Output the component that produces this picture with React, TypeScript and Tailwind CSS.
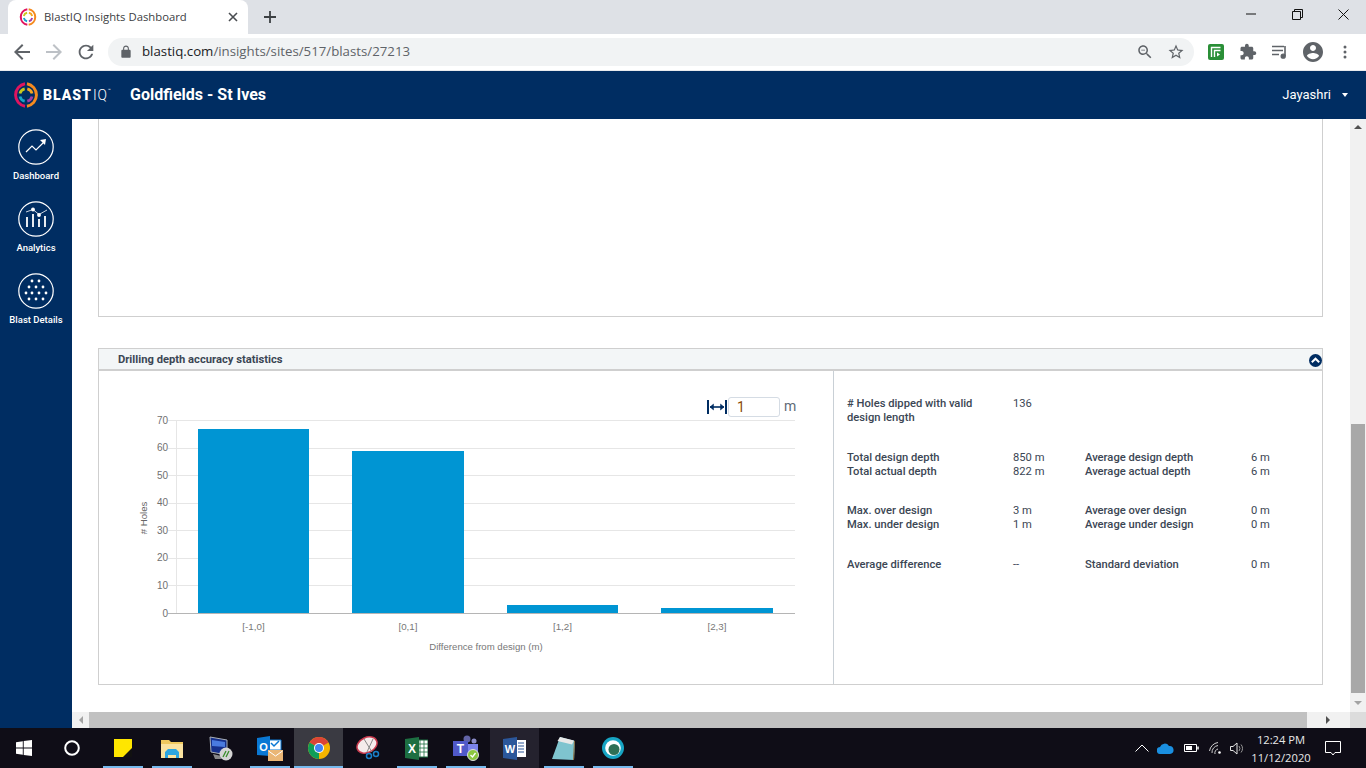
import React from "react";

const P = ({ d, size = 24, cls = "" }: { d: string; size?: number; cls?: string }) => (
  <svg width={size} height={size} viewBox="0 0 24 24" className={cls} fill="currentColor"><path d={d} /></svg>
);

const back = "M20 11H7.83l5.59-5.59L12 4l-8 8 8 8 1.41-1.41L7.83 13H20v-2z";
const fwd = "M4 11h12.17l-5.59-5.59L12 4l8 8-8 8-1.41-1.41L16.17 13H4v-2z";
const reload = "M17.65 6.35C16.2 4.9 14.21 4 12 4c-4.42 0-7.99 3.58-7.99 8s3.57 8 7.99 8c3.73 0 6.84-2.55 7.73-6h-2.08c-.82 2.33-3.04 4-5.65 4-3.31 0-6-2.69-6-6s2.69-6 6-6c1.66 0 3.14.69 4.22 1.78L13 11h7V4l-2.35 2.35z";
const lock = "M18 8h-1V6c0-2.76-2.24-5-5-5S7 3.24 7 6v2H6c-1.1 0-2 .9-2 2v10c0 1.1.9 2 2 2h12c1.1 0 2-.9 2-2V10c0-1.1-.9-2-2-2zM15.1 8H8.9V6c0-1.71 1.39-3.1 3.1-3.1 1.71 0 3.1 1.39 3.1 3.1v2z";
const ext = "M20.5 11H19V7c0-1.1-.9-2-2-2h-4V3.5C13 2.12 11.88 1 10.5 1S8 2.12 8 3.5V5H4c-1.1 0-1.99.9-1.99 2v3.8H3.5c1.49 0 2.7 1.21 2.7 2.7s-1.21 2.7-2.7 2.7H2V20c0 1.1.9 2 2 2h3.8v-1.5c0-1.49 1.21-2.7 2.7-2.7 1.49 0 2.7 1.21 2.7 2.7V22H17c1.1 0 2-.9 2-2v-4h1.5c1.38 0 2.5-1.12 2.5-2.5S21.88 11 20.5 11z";
const acct = "M12 2C6.48 2 2 6.48 2 12s4.48 10 10 10 10-4.48 10-10S17.52 2 12 2zm0 3c1.66 0 3 1.34 3 3s-1.34 3-3 3-3-1.34-3-3 1.34-3 3-3zm0 14.2c-2.5 0-4.71-1.28-6-3.22.03-1.99 4-3.08 6-3.08 1.99 0 5.97 1.09 6 3.08-1.29 1.94-3.5 3.22-6 3.22z";
const star = "M22 9.24l-7.19-.62L12 2 9.19 8.63 2 9.24l5.46 4.73L5.82 21 12 17.27 18.18 21l-1.63-7.03L22 9.24zM12 15.4l-3.76 2.27 1-4.28-3.32-2.88 4.38-.38L12 6.1l1.71 4.04 4.38.38-3.32 2.88 1 4.28L12 15.4z";
const zoomOut = "M15.5 14h-.79l-.28-.27C15.41 12.59 16 11.11 16 9.5 16 5.91 13.09 3 9.5 3S3 5.91 3 9.5 5.91 16 9.5 16c1.61 0 3.09-.59 4.23-1.57l.27.28v.79l5 4.99L20.49 19l-4.99-5zm-6 0C7.01 14 5 11.99 5 9.5S7.01 5 9.5 5 14 7.01 14 9.5 11.99 14 9.5 14zM7 9h5v1H7z";

const Ring = ({ size }: { size: number }) => (
  <svg width={size} height={size} viewBox="0 0 32 32" fill="none" className="shrink-0">
    <path d="M14.800 2.200A14 14 0 0 0 14.800 29.800" stroke="#e0145f" strokeWidth="3.600" />
    <path d="M17.200 2.200A14 14 0 0 1 17.200 29.800" stroke="#f58a1f" strokeWidth="3.600" />
    <path d="M8.600 14.200A7.700 7.700 0 0 1 14.400 8.500" stroke="#c8c81e" strokeWidth="3.400" />
    <path d="M17.600 8.500A7.700 7.700 0 0 1 23.400 14.200" stroke="#f5a623" strokeWidth="3.400" />
    <path d="M8.600 17.800A7.700 7.700 0 0 0 14.400 23.500" stroke="#19a6c9" strokeWidth="3.400" />
    <path d="M17.600 23.500A7.700 7.700 0 0 0 23.400 17.800" stroke="#a23ea8" strokeWidth="3.400" />
  </svg>
);

function TabStrip() {
  return (
    <div className="flex h-[34px] bg-[#dee1e6] shrink-0">
      <div className="ml-2 w-[240px] h-[34px] bg-white rounded-t-[8px] flex items-center pl-[11px] pr-[10px]">
        <Ring size={18} />
        <span className="ml-[7px] flex-1 text-[11.300px] text-[#3c4043] font-['Open_Sans',sans-serif] whitespace-nowrap">BlastIQ Insights Dashboard</span>
        <svg width="10" height="10" viewBox="0 0 10 10" stroke="#4a4d51" strokeWidth="1.6"><path d="M1 1l8 8M9 1l-8 8" /></svg>
      </div>
      <div className="ml-4 flex items-center text-[#3c4043]">
        <svg width="12" height="12" viewBox="0 0 12 12" stroke="currentColor" strokeWidth="1.8"><path d="M6 0v12M0 6h12" /></svg>
      </div>
      <div className="flex-1" />
      <div className="flex h-7 text-[#111]">
        <div className="w-[46px] flex items-center justify-center">
          <svg width="10" height="2" viewBox="0 0 10 2" stroke="currentColor"><path d="M0 1h10" /></svg>
        </div>
        <div className="w-[46px] flex items-center justify-center">
          <svg width="11" height="11" viewBox="0 0 11 11" fill="none" stroke="currentColor"><path d="M.5 2.500h8v8h-8zM2.500 2.500v-2h8v8h-2" /></svg>
        </div>
        <div className="w-[46px] flex items-center justify-center">
          <svg width="11" height="11" viewBox="0 0 11 11" fill="none" stroke="currentColor"><path d="M.5.500l10 10M10.500.500l-10 10" /></svg>
        </div>
      </div>
    </div>
  );
}

function Toolbar() {
  return (
    <div className="flex h-[37px] items-start bg-white border-b border-b-[#e8eaed] shrink-0 pt-1">
      <div className="flex items-center h-7 pl-[10px] text-[#5f6368]">
        <P d={back} size={24} />
        <P d={fwd} size={24} cls="ml-2 text-[#bdc1c6]" />
        <P d={reload} size={22} cls="ml-[9px]" />
      </div>
      <div className="ml-[11px] w-[1086px] h-7 rounded-full bg-[#f1f3f4] flex items-center pl-[11px] pr-[9px]">
        <P d={lock} size={14} cls="text-[#5f6368]" />
        <span className="ml-[9px] flex-1 text-[13.250px] font-['Open_Sans',sans-serif] text-[#5f6368] whitespace-nowrap">
          <span className="text-[#202124]">blastiq.com</span>/insights/sites/517/blasts/27213
        </span>
        <P d={zoomOut} size={18} cls="text-[#5f6368]" />
        <P d={star} size={18} cls="ml-[13px] text-[#5f6368]" />
      </div>
      <div className="flex items-center h-7 text-[#5f6368]">
        <div className="ml-[14px] w-4 h-4 rounded-[2px] bg-[#2a8f37] flex items-center justify-center">
          <svg width="12" height="12" viewBox="0 0 12 12" fill="none" stroke="#fff" strokeWidth="1.400"><path d="M1.500 11V1.500h9M4.500 11V4.500h6" /><path d="M7 6.500l3 2-3 2z" fill="#fff" stroke="none" /></svg>
        </div>
        <P d={ext} size={18} cls="ml-[15px]" />
        <svg width="18" height="18" viewBox="0 0 18 18" className="ml-[14px]" fill="none" stroke="currentColor" strokeWidth="1.300"><path d="M1 3.500h12M1 7.500h11M1 11.500h7" /><path d="M14 3v10" strokeWidth="1.600" /><circle cx="12.200" cy="13.200" r="2" fill="currentColor" /></svg>
        <P d={acct} size={24} cls="ml-[12px]" />
        <svg width="4" height="14" viewBox="0 0 4 14" className="ml-[18px]" fill="currentColor"><circle cx="2" cy="2" r="1.500" /><circle cx="2" cy="7" r="1.500" /><circle cx="2" cy="12" r="1.500" /></svg>
      </div>
    </div>
  );
}

function AppHeader() {
  return (
    <div className="flex h-12 bg-[#002d62] items-center text-white shrink-0 font-['Roboto',sans-serif]">
      <div className="ml-[13px]"><Ring size={26} /></div>
      <div className="ml-[4px] w-[73px] flex items-baseline text-[14px] leading-none whitespace-nowrap">
        <span className="font-black tracking-[1px]">BLAST</span>
        <span className="ml-[1px] font-light tracking-[0.8px]">IQ</span>
        <span className="text-[5px] self-start">™</span>
      </div>
      <div className="ml-[14px] text-[16px] font-bold whitespace-nowrap">Goldfields - St Ives</div>
      <div className="flex-1" />
      <div className="text-[13px]">Jayashri</div>
      <div className="ml-[11px] mr-[18px] w-0 h-0 border-x-[3px] border-x-transparent border-t-[4px] border-t-white" />
    </div>
  );
}

const DashIcon = () => (
  <svg width="36" height="36" viewBox="0 0 36 36" fill="none" stroke="#fff" strokeWidth="1.200" className="shrink-0">
    <circle cx="18" cy="18" r="17.200" />
    <path d="M8 23l6-6 4 4 8-8" />
    <path d="M22 11l6-1-1 6z" fill="#fff" stroke="none" />
  </svg>
);
const AnalyticsIcon = () => (
  <svg width="36" height="36" viewBox="0 0 36 36" fill="none" stroke="#fff" strokeWidth="1.200" className="shrink-0">
    <circle cx="18" cy="18" r="17.200" />
    <path d="M8 11l7-2.500 6 5 8-4.500" strokeWidth=".8" />
    <path d="M9 16v10M15 13v13M21 18v8M27 15v11" strokeWidth="1.800" />
    <circle cx="15" cy="8.500" r="1.300" fill="#fff" />
    <circle cx="21" cy="14" r="1.300" fill="#fff" />
  </svg>
);
const BlastIcon = () => {
  const rows: [number, number[]][] = [[8, [14, 21]], [14, [11, 18, 25]], [20, [8, 14, 21, 28]], [26, [11, 18, 25]]];
  return (
    <svg width="36" height="36" viewBox="0 0 36 36" fill="none" stroke="#fff" strokeWidth="1.200" className="shrink-0">
      <circle cx="18" cy="18" r="17.200" />
      {rows.map(([y, xs]) => xs.map((x) => <circle key={`${x}-${y}`} cx={x} cy={y} r="1.400" fill="#fff" stroke="none" />))}
    </svg>
  );
};

function Sidebar() {
  const items: [React.ReactNode, string][] = [
    [<DashIcon />, "Dashboard"],
    [<AnalyticsIcon />, "Analytics"],
    [<BlastIcon />, "Blast Details"],
  ];
  return (
    <div className="w-[72px] shrink-0 bg-[#002d62] flex flex-col items-center pt-[10px] gap-[18px] text-white font-['Roboto',sans-serif]">
      {items.map(([icon, label]) => (
        <div key={label} className="flex flex-col items-center h-[54px]">
          {icon}
          <div className="mt-[4px] text-[9.500px] font-medium leading-[14px] whitespace-nowrap">{label}</div>
        </div>
      ))}
    </div>
  );
}

function Chart() {
  const X0 = 176, X1 = 795;
  const y = (v: number) => 613 - v * (193 / 70);
  const bars: [number, number, number, string][] = [
    [198, 111, 67, "[-1,0]"],
    [352, 112, 59, "[0,1]"],
    [507, 111, 3, "[1,2]"],
    [661, 112, 2, "[2,3]"],
  ];
  return (
    <svg width="734" height="313" viewBox="99 371 734 313" className="font-['Liberation_Sans',sans-serif] block">
      {[10, 20, 30, 40, 50, 60, 70].map((v) => (
        <path key={v} d={`M${X0 - 8} ${Math.round(y(v)) + 0.5}H${X1}`} stroke="#e6e6e6" />
      ))}
      <path d={`M${X0 + 0.5} 420V613`} stroke="#e6e6e6" />
      {bars.map(([x, w, v, l]) => {
        const t = Math.ceil(y(v));
        return (
          <g key={l}>
            <rect x={x} y={t} width={w} height={613 - t} fill="#0095d3" />
            <text x={x + w / 2} y="630" textAnchor="middle" fontSize="9.800" fill="#777">{l}</text>
          </g>
        );
      })}
      <path d={`M168 613.500H${X1}`} stroke="#b5b5b5" />
      {[0, 10, 20, 30, 40, 50, 60, 70].map((v) => (
        <text key={v} x="168" y={y(v) + 3.5} textAnchor="end" fontSize="10" fill="#707070">{v}</text>
      ))}
      <text x="486" y="650" textAnchor="middle" fontSize="9.600" fill="#777">Difference from design (m)</text>
      <text transform="translate(147 518) rotate(-90)" textAnchor="middle" fontSize="9.600" fill="#666"># Holes</text>
    </svg>
  );
}

const L = ({ children }: { children: React.ReactNode }) => <div className="font-medium text-[#3b4654]">{children}</div>;
const V = ({ children }: { children: React.ReactNode }) => <div className="text-[#3b4654] [font-variant-ligatures:none]">{children}</div>;

function StatsRow({ a, b, c, d }: { a: string; b: string; c: string; d: string }) {
  return (
    <>
      <L>{a}</L><V>{b}</V><L>{c}</L><V>{d}</V>
    </>
  );
}

function Stats() {
  return (
    <div className="flex-1 pl-[13px] pt-[26px] text-[11.200px] font-['Roboto',sans-serif]">
      <div className="grid grid-cols-[166px_72px] leading-[14px]">
        <div className="font-medium text-[#3b4654] max-w-[140px]"># Holes dipped with valid design length</div>
        <V>136</V>
      </div>
      <div className="mt-[26px] grid grid-cols-[166px_72px_166px_60px] leading-[14px]">
        <StatsRow a="Total design depth" b="850 m" c="Average design depth" d="6 m" />
        <StatsRow a="Total actual depth" b="822 m" c="Average actual depth" d="6 m" />
      </div>
      <div className="mt-[25px] grid grid-cols-[166px_72px_166px_60px] leading-[14px]">
        <StatsRow a="Max. over design" b="3 m" c="Average over design" d="0 m" />
        <StatsRow a="Max. under design" b="1 m" c="Average under design" d="0 m" />
      </div>
      <div className="mt-[26px] grid grid-cols-[166px_72px_166px_60px] leading-[14px]">
        <StatsRow a="Average difference" b="--" c="Standard deviation" d="0 m" />
      </div>
    </div>
  );
}

function Main() {
  return (
    <div className="flex-1 min-w-0 flex flex-col bg-white">
      <div className="flex-1 flex min-h-0">
        <div className="flex-1 min-w-0 pl-[26px] overflow-hidden">
          <div className="w-[1225px] h-[198px] border-x border-b border-[#cfcfcf]" />
          <div className="mt-[31px] w-[1225px] h-[337px] border border-[#cfcfcf] flex flex-col">
            <div className="h-[22px] shrink-0 bg-[#f3f6f7] border-b-2 border-b-[#cfcfcf] flex items-center pt-[2px] pl-[19px] font-['Roboto',sans-serif] text-[11.200px] font-bold text-[#3b4654]">
              <span className="flex-1">Drilling depth accuracy statistics</span>
              <div className="w-[13px] h-[13px] rounded-full bg-[#002d62] flex items-center justify-center">
                <svg width="9" height="6" viewBox="0 0 9 6" fill="none" stroke="#fff" strokeWidth="2"><path d="M.8 5.200L4.500 1.700l3.700 3.500" /></svg>
              </div>
            </div>
            <div className="flex-1 flex min-h-0">
              <div className="relative w-[735px] shrink-0 border-r border-r-[#c9d0d6]">
                <Chart />
                <div className="absolute left-[608px] top-[25px] flex items-center font-['Roboto',sans-serif]">
                  <svg width="20" height="14" viewBox="0 0 20 14" fill="none" stroke="#002d62"><path d="M1 0v14M19 0v14" strokeWidth="2" /><path d="M3 7h14" strokeWidth="1.600" /><path d="M3 7l3.500-3v6zM17 7l-3.500-3v6z" fill="#002d62" strokeWidth=".5" /></svg>
                  <div className="ml-[1px] w-[52px] h-[20px] border border-[#d5dce4] rounded-[3px] pl-[8px] text-[14px] leading-[18px] text-[#8a4b08]">1</div>
                  <div className="ml-[4px] text-[14px] text-[#5f6b76]">m</div>
                </div>
              </div>
              <Stats />
            </div>
          </div>
        </div>
        <div className="w-4 shrink-0 bg-[#f1f1f1] flex flex-col items-center">
          <div className="h-4 flex items-center justify-center shrink-0">
            <div className="w-0 h-0 border-x-[4px] border-x-transparent border-b-[4px] border-b-[#505050]" />
          </div>
          <div className="flex-1" />
          <div className="w-[14px] h-[269px] bg-[#a8a8a8]" />
          <div className="h-[19px] flex items-center justify-center shrink-0">
            <div className="w-0 h-0 border-x-[4px] border-x-transparent border-t-[4px] border-t-[#a3a3a3]" />
          </div>
        </div>
      </div>
      <div className="h-4 shrink-0 flex bg-[#f1f1f1]">
        <div className="w-[17px] flex items-center justify-center">
          <div className="w-0 h-0 border-y-[4px] border-y-transparent border-r-[4px] border-r-[#a3a3a3]" />
        </div>
        <div className="w-[1218px] bg-[#c1c1c1]" />
        <div className="flex-1" />
        <div className="w-[14px] flex items-center justify-center">
          <div className="w-0 h-0 border-y-[4px] border-y-transparent border-l-[4px] border-l-[#505050]" />
        </div>
        <div className="ml-[15px] w-4 bg-[#dcdcdc]" />
      </div>
    </div>
  );
}

const Sticky = () => (
  <svg width="18" height="18" viewBox="0 0 18 18"><path d="M0 0h18v18H0z" fill="#ffe600" /><path d="M9 18l9-9v9z" fill="#111" /></svg>
);
const Folder = () => (
  <svg width="22" height="19" viewBox="0 0 22 19"><path d="M0 1h8l2 2h12v16H0z" fill="#f0c95f" /><path d="M0 5h22v14H0z" fill="#fbe3a0" /><path d="M4 19v-6l3-3h8l3 3v6h-3v-3H7v3z" fill="#2ea6e0" /></svg>
);
const Remote = () => (
  <svg width="24" height="25" viewBox="0 0 24 25"><path d="M1 1l17 3v15L2 16z" fill="#16308c" stroke="#a9b0b8" /><path d="M3 4l13 2v5L3 10z" fill="#4a7be0" /><path d="M4 18l8 2v3H6z" fill="#888" /><circle cx="17" cy="18" r="6.500" fill="#d5d5d5" /><path d="M14 21l3-6M17 21l3-6" stroke="#3a8d2a" strokeWidth="1.300" /></svg>
);
const Outlook = () => (
  <svg width="26" height="25" viewBox="0 0 26 25"><path d="M11 4h13v10H11z" fill="#fff" stroke="#0a78d4" /><path d="M14 7l3 3 5-5" stroke="#0a78d4" strokeWidth="1.500" fill="none" /><path d="M0 2l13-2v20L0 19z" fill="#0a78d4" /><text x="6.500" y="14.500" textAnchor="middle" fontSize="11" fontWeight="700" fill="#fff" fontFamily="Liberation Sans">O</text><path d="M11 14h15v11H11z" fill="#eab676" /><path d="M11.500 15l7 5 7-5" stroke="#fff" fill="none" /></svg>
);
const Chrome = () => (
  <svg width="22" height="22" viewBox="0 0 22 22">
    <circle cx="11" cy="11" r="11" fill="#f4b400" />
    <path d="M11 11L1.500 5.500A11 11 0 0 1 20.500 5.500z" fill="#db4437" />
    <path d="M11 11l-9.500-5.500A11 11 0 0 0 11 22z" fill="#0f9d58" />
    <circle cx="11" cy="11" r="5" fill="#fff" />
    <circle cx="11" cy="11" r="4" fill="#4285f4" />
  </svg>
);
const Snip = () => (
  <svg width="24" height="24" viewBox="0 0 24 24"><ellipse cx="11" cy="9" rx="10.500" ry="7.500" transform="rotate(-25 11 9)" fill="#f5ecec" stroke="#c93a4e" strokeWidth="1.500" /><path d="M8 3l8 13M17 3l-6 13" stroke="#888" /><circle cx="13" cy="20" r="2.500" fill="none" stroke="#1a7fc8" strokeWidth="1.500" /><circle cx="20" cy="18" r="2.500" fill="none" stroke="#1a7fc8" strokeWidth="1.500" /></svg>
);
const Excel = () => (
  <svg width="23" height="23" viewBox="0 0 23 23"><path d="M11 3h12v17H11z" fill="#fff" stroke="#1d6f42" /><path d="M15 3v17M19 3v17M11 7h12M11 11h12M11 15h12" stroke="#1d6f42" strokeWidth=".8" /><path d="M0 2l14-2v23L0 21z" fill="#1d6f42" /><text x="7" y="15.500" textAnchor="middle" fontSize="12" fontWeight="700" fill="#fff" fontFamily="Liberation Sans">X</text></svg>
);
const Teams = () => (
  <svg width="26" height="26" viewBox="0 0 26 26"><circle cx="14" cy="4" r="3.500" fill="#6264a7" /><circle cx="21" cy="6" r="2.500" fill="#8b8cc7" /><path d="M11 9h14v11H11z" fill="#7b83eb" /><path d="M0 6h15v15H0z" fill="#5059c9" /><text x="7.500" y="18" textAnchor="middle" fontSize="12" fontWeight="700" fill="#fff" fontFamily="Liberation Sans">T</text><circle cx="20" cy="20" r="5.500" fill="#8cc63f" stroke="#ddd" /><path d="M17.500 20l2 2 3-4" stroke="#fff" strokeWidth="1.300" fill="none" /></svg>
);
const Word = () => (
  <svg width="23" height="23" viewBox="0 0 23 23"><path d="M11 3h12v17H11z" fill="#fff" /><path d="M15 6h6M15 9h6M15 12h6M15 15h6" stroke="#2b579a" strokeWidth="1.200" /><path d="M0 2l14-2v23L0 21z" fill="#2b579a" /><text x="7" y="15.500" textAnchor="middle" fontSize="11" fontWeight="700" fill="#fff" fontFamily="Liberation Sans">W</text></svg>
);
const Note = () => (
  <svg width="23" height="23" viewBox="0 0 23 23"><path d="M8 0l15 4-1 19-22-1z" fill="#7fc4cf" /><path d="M8 0l14 3.500-2 4L5.500 4z" fill="#e8e8e8" /><path d="M22 4l1 0-1 19h-1z" fill="#8a6a3a" /></svg>
);
const Orb = () => (
  <svg width="22" height="22" viewBox="0 0 22 22"><circle cx="11" cy="11" r="11" fill="#17a5c4" /><circle cx="11" cy="11" r="7.800" fill="#fff" /><circle cx="12" cy="12.500" r="5.500" fill="#2f6f55" /></svg>
);

function TaskItem({ icon, run = false, active = "" }: { icon: React.ReactNode; run?: boolean; active?: string }) {
  return (
    <div className={`w-[49px] h-10 flex flex-col items-center ${active}`}>
      <div className="h-[38px] pt-[2px] flex items-center justify-center">{icon}</div>
      {run && <div className={`h-[2px] bg-[#76b9ed] ${active ? "w-full" : "w-10"}`} />}
    </div>
  );
}

function Taskbar() {
  return (
    <div className="h-10 shrink-0 bg-[#0f0d17] flex items-start text-white">
      <div className="w-12 h-10 flex items-center justify-center">
        <svg width="16" height="16" viewBox="0 0 16 16" fill="#fff"><path d="M0 2.200l6.800-1v6.300H0zM7.700 1.100L16 0v7.500H7.700zM0 8.500h6.800v6.300L0 13.800zM7.700 8.500H16V16l-8.300-1.100z" /></svg>
      </div>
      <div className="w-[47px] h-10 flex items-center justify-center">
        <svg width="16" height="16" viewBox="0 0 16 16" fill="none" stroke="#fff" strokeWidth="2"><circle cx="8" cy="8" r="6.800" /></svg>
      </div>
      <div className="w-[3px]" />
      <TaskItem icon={<Sticky />} run />
      <TaskItem icon={<Folder />} run />
      <TaskItem icon={<Remote />} />
      <TaskItem icon={<Outlook />} run />
      <TaskItem icon={<Chrome />} run active="bg-[#3a3a42]" />
      <TaskItem icon={<Snip />} />
      <TaskItem icon={<Excel />} run />
      <TaskItem icon={<Teams />} run />
      <TaskItem icon={<Word />} active="bg-[#24222e]" />
      <TaskItem icon={<Note />} run />
      <TaskItem icon={<Orb />} run />
      <div className="flex-1" />
      <div className="h-10 flex items-center">
        <svg width="14" height="8" viewBox="0 0 14 8" fill="none" stroke="#fff"><path d="M.5 7.500L7 1l6.500 6.500" /></svg>
        <svg width="17" height="11" viewBox="0 0 17 11" className="ml-[8px]"><path d="M3.500 11a3.500 3.500 0 0 1-.5-7A5 5 0 0 1 12 3a4 4 0 0 1 1 8z" fill="#1a8fe0" /></svg>
        <svg width="15" height="8" viewBox="0 0 15 8" className="ml-[10px]" fill="none" stroke="#fff"><path d="M.5.500h12v7H.500z" /><path d="M2 2h6v4H2z" fill="#fff" stroke="none" /><path d="M14 2.500v3" strokeWidth="1.500" /></svg>
        <svg width="13" height="13" viewBox="0 0 13 13" className="ml-[10px]" fill="none" stroke="#cfcfcf"><path d="M.5 9A10 10 0 0 1 9 .5M3 11a7 7 0 0 1 6-7.500M6 12a4 4 0 0 1 3-5" /><circle cx="10.500" cy="10.500" r="1.300" fill="#fff" stroke="none" /></svg>
        <svg width="16" height="13" viewBox="0 0 16 13" className="ml-[8px]" fill="none" stroke="#e5e5e5"><path d="M.5 4.500h2.500L7 1v11L3 8.500H.5z" /><path d="M9 4a4 4 0 0 1 0 5M11 2.500a6 6 0 0 1 0 8" stroke="#999" /></svg>
      </div>
      <div className="w-[66px] ml-[2px] h-10 pt-[2px] flex flex-col items-center justify-center text-[11.200px] leading-[18px] font-['Open_Sans',sans-serif] text-[#e8e8e8]">
        <div>12:24 PM</div>
        <div className="whitespace-nowrap">11/12/2020</div>
      </div>
      <div className="ml-[11px] mr-[25px] h-10 flex items-center">
        <svg width="16" height="15" viewBox="0 0 16 15" fill="none" stroke="#fff"><path d="M.5.500h15v11H10l-2 2.500-2-2.500H.5z" /></svg>
      </div>
    </div>
  );
}

export default function App() {
  return (
    <div className="w-[1366px] h-[768px] overflow-hidden flex flex-col font-['Roboto',sans-serif]">
      <TabStrip />
      <Toolbar />
      <AppHeader />
      <div className="flex-1 flex min-h-0">
        <Sidebar />
        <Main />
      </div>
      <Taskbar />
    </div>
  );
}
